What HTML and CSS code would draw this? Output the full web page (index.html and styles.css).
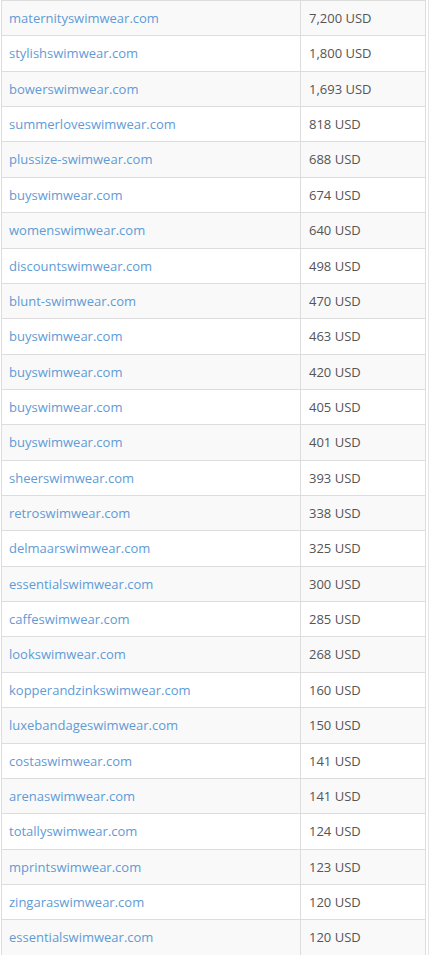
FILE: index.html
```html
<!DOCTYPE html>
<html>
<head>
<meta charset="utf-8">
<link rel="stylesheet" href="styles.css">
</head>
<body>
<div class="wrap">
<table class="prices">
<colgroup><col class="c-domain"><col class="c-price"></colgroup>
<tbody>
<tr><td class="domain"><a href="#">maternityswimwear.com</a></td><td class="price">7,200 USD</td></tr>
<tr><td class="domain"><a href="#">stylishswimwear.com</a></td><td class="price">1,800 USD</td></tr>
<tr><td class="domain"><a href="#">bowerswimwear.com</a></td><td class="price">1,693 USD</td></tr>
<tr><td class="domain"><a href="#">summerloveswimwear.com</a></td><td class="price">818 USD</td></tr>
<tr><td class="domain"><a href="#">plussize-swimwear.com</a></td><td class="price">688 USD</td></tr>
<tr><td class="domain"><a href="#">buyswimwear.com</a></td><td class="price">674 USD</td></tr>
<tr><td class="domain"><a href="#">womenswimwear.com</a></td><td class="price">640 USD</td></tr>
<tr><td class="domain"><a href="#">discountswimwear.com</a></td><td class="price">498 USD</td></tr>
<tr><td class="domain"><a href="#">blunt-swimwear.com</a></td><td class="price">470 USD</td></tr>
<tr><td class="domain"><a href="#">buyswimwear.com</a></td><td class="price">463 USD</td></tr>
<tr><td class="domain"><a href="#">buyswimwear.com</a></td><td class="price">420 USD</td></tr>
<tr><td class="domain"><a href="#">buyswimwear.com</a></td><td class="price">405 USD</td></tr>
<tr><td class="domain"><a href="#">buyswimwear.com</a></td><td class="price">401 USD</td></tr>
<tr><td class="domain"><a href="#">sheerswimwear.com</a></td><td class="price">393 USD</td></tr>
<tr><td class="domain"><a href="#">retroswimwear.com</a></td><td class="price">338 USD</td></tr>
<tr><td class="domain"><a href="#">delmaarswimwear.com</a></td><td class="price">325 USD</td></tr>
<tr><td class="domain"><a href="#">essentialswimwear.com</a></td><td class="price">300 USD</td></tr>
<tr><td class="domain"><a href="#">caffeswimwear.com</a></td><td class="price">285 USD</td></tr>
<tr><td class="domain"><a href="#">lookswimwear.com</a></td><td class="price">268 USD</td></tr>
<tr><td class="domain"><a href="#">kopperandzinkswimwear.com</a></td><td class="price">160 USD</td></tr>
<tr><td class="domain"><a href="#">luxebandageswimwear.com</a></td><td class="price">150 USD</td></tr>
<tr><td class="domain"><a href="#">costaswimwear.com</a></td><td class="price">141 USD</td></tr>
<tr><td class="domain"><a href="#">arenaswimwear.com</a></td><td class="price">141 USD</td></tr>
<tr><td class="domain"><a href="#">totallyswimwear.com</a></td><td class="price">124 USD</td></tr>
<tr><td class="domain"><a href="#">mprintswimwear.com</a></td><td class="price">123 USD</td></tr>
<tr><td class="domain"><a href="#">zingaraswimwear.com</a></td><td class="price">120 USD</td></tr>
<tr><td class="domain"><a href="#">essentialswimwear.com</a></td><td class="price">120 USD</td></tr>
</tbody>
</table>
</div>
</body>
</html>
```
FILE: styles.css
```css
html, body {
  margin: 0;
  padding: 0;
  background: #ffffff;
}
body {
  font-family: "Open Sans", "Liberation Sans", sans-serif;
  font-size: 13px;
  color: #555555;
}
.wrap {
  width: 428px;
  border-right: 1px solid #e6e6e6;
}
.prices {
  border-collapse: collapse;
  width: 425px;
  margin: 0 0 0 1px;
  table-layout: fixed;
}
.c-domain {
  width: 299px;
}
.prices td {
  border: 1px solid #dddddd;
  padding: 8px 8px;
  line-height: 18.36px;
  vertical-align: middle;
  overflow: hidden;
  white-space: nowrap;
}
.prices td.domain {
  padding-left: 7px;
}
.prices tr:nth-child(odd) td {
  background: #f9f9f9;
}
.domain a {
  color: #5f9bd6;
  text-decoration: none;
}
.price {
  color: #555555;
}
```
